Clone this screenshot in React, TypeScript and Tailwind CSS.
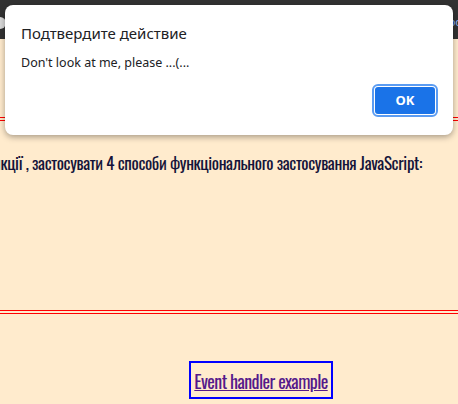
import React from 'react';

const condensed = { fontFamily: "Oswald, 'Liberation Sans Narrow', 'DejaVu Sans Condensed', 'Liberation Sans', sans-serif" };

const DoubleRule: React.FC = () => (
    <div className="flex flex-col gap-[2px]">
        <div className="h-px bg-[#ff0000]"></div>
        <div className="h-px bg-[#ff0000]"></div>
    </div>
);

export default function App() {
    return (
        <div className="relative w-[458px] h-[404px] overflow-hidden bg-[#ffebcd]">
            {/* Browser toolbar strip */}
            <div className="h-[39px] bg-[#323232] flex items-center justify-between">
                <div className="w-[12px] h-[12px] rounded-full bg-[#d8d8d8] -ml-[6px] mt-[6px]"></div>
                <span className="text-[11px] text-[#8ab4f8] -mr-[4px] mt-[6px]" style={{ fontFamily: "'Noto Sans', sans-serif" }}>oo</span>
            </div>

            <div className="mt-[78px]">
                <DoubleRule />
            </div>

            <div className="mt-[29px] h-[26px] flex justify-end pr-[36px]">
                <p className="whitespace-nowrap text-[17px] font-normal text-[#14143a] leading-[26px] tracking-[-0.35px]" style={condensed}>
                    Використовуючи можливості функції , застосувати 4 способи функціонального застосування JavaScript:
                </p>
            </div>

            <div className="mt-[134px]">
                <DoubleRule />
            </div>

            <div className="mt-[47px] flex">
                <div className="ml-[189px] w-[144px] h-[38px] border-2 border-[#0000ff] flex items-center justify-center">
                    <a href="#" className="whitespace-nowrap text-[18px] text-[#551a8b] underline leading-none tracking-[-0.6px] pt-[2px]" style={condensed}>
                        Event handler example
                    </a>
                </div>
            </div>

            {/* Confirm dialog */}
            <div
                className="absolute left-[5px] top-[5px] w-[448px] h-[130px] bg-white rounded-[8px] shadow-[0_2px_6px_rgba(0,0,0,0.35)] px-[16px] pt-[17px]"
                style={{ fontFamily: "'Segoe UI', 'Noto Sans', sans-serif" }}
            >
                <div className="text-[15px] text-[#202124] leading-[22px]">Подтвердите действие</div>
                <div className="mt-[10px] text-[12.5px] text-[#202124] leading-[18px]">Don't look at me, please ...(...</div>
                <div className="mt-[13px] flex justify-end">
                    <button className="w-[64px] h-[31px] rounded-[5px] bg-[#1a73e8] text-white text-[13px] font-bold ring-2 ring-inset ring-white outline-2 outline-[#5b9cf2] -outline-offset-1">
                        OK
                    </button>
                </div>
            </div>
        </div>
    );
}
